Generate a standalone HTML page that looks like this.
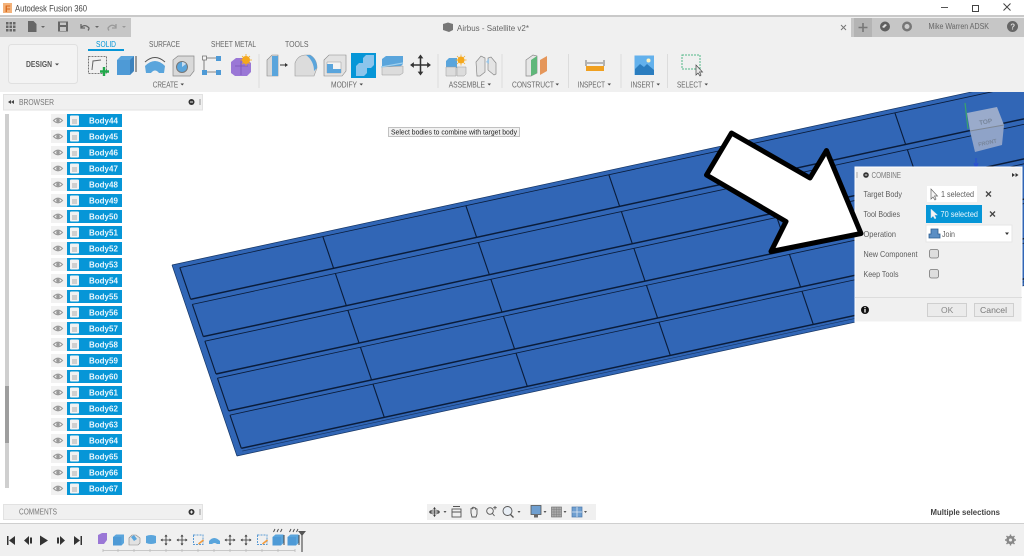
<!DOCTYPE html>
<html><head><meta charset="utf-8"><title>Autodesk Fusion 360</title>
<style>
html,body{margin:0;padding:0;background:#fff;width:1024px;height:556px;overflow:hidden}
svg{display:block;font-family:"Liberation Sans",sans-serif;filter:blur(.35px)}
.l{font-size:8.5px;fill:#666}
.c{font-size:8px;fill:#777}
.b{font-size:8px;font-weight:bold;fill:#e8f6fd}
.n{font-size:8.5px;fill:#5c5c5c}
</style></head><body>
<svg width="1024" height="556" viewBox="0 0 1024 556" xmlns="http://www.w3.org/2000/svg">
<defs>
<path id="col" fill="none" stroke="#0a1c3a" stroke-width="1.1" d="M0 4V35.7M0 40.8V73M0 77.6V110.4M0 114.6V147.3M0 151.5V184.7"/>
<g id="r">
<rect x="51" y="114" width="16" height="13" fill="#f1f1f1"/>
<path d="M53.5 120.5q4.5-4.5 9 0q-4.5 4.5-9 0z" fill="#f4f4f4" stroke="#999" stroke-width="1.1"/>
<circle cx="58" cy="120.5" r="1.8" fill="#999"/>
<rect x="67" y="114" width="55" height="13" fill="#0696d7"/>
<rect x="70" y="115.5" width="9" height="10" rx="1" fill="#f2f2f2"/>
<rect x="72" y="119" width="5" height="5" fill="#cfcfcf"/>
</g>
<g id="mv">
<path d="M0-4.5V4.5M-4.500 0H4.500" fill="none" stroke="#333" stroke-width=".8"/>
<path d="M-1.500-3.500L0-5.500L1.500-3.500zM-1.500 3.500L0 5.500L1.500 3.500zM-3.500-1.500L-5.500 0L-3.500 1.500zM3.500-1.500L5.500 0L3.500 1.500z" fill="#333"/>
</g>
<g id="sk"><rect x="-5" y="-5" width="9.500" height="9.500" fill="none" stroke="#5b9bd5" stroke-dasharray="2 1"/><path d="M0 4L5 0" stroke="#f39c3d" stroke-width="1.600"/></g>
<g id="bx"><path d="M-5.500-3L-2.500-5.500H5.500V3L3 5.500H-5.500z" fill="#5aa5dc"/><path d="M-5.500-3H3V5.500H-5.500z" fill="#4e9ad6"/></g>
</defs>

<!-- plate -->
<g transform="matrix(1 -0.2165 0.34 1 172 265)">
<rect x="0" y="0" width="1000" height="191" fill="#3166b6"/>
<g fill="none" stroke="#0a1c3a">
<path d="M0 0H1000M0 0V191M0 191H1000" stroke-width=".7" stroke="#173766"/>
<path d="M6.500 4H1000M6.500 40.800H1000M6.500 77.600H1000M6.500 114.600H1000M6.500 151.500H1000" stroke-width=".8"/>
<path d="M6.500 35.700H1000M6.500 73H1000M6.500 110.400H1000M6.500 147.300H1000M6.500 184.700H1000" stroke-width="1.400"/>
<path d="M6.500 187.500H1000" stroke-width=".6" stroke="#173766"/>
</g>
<use href="#col" x="6.500"/><use href="#col" x="149.500"/><use href="#col" x="292.500"/><use href="#col" x="435.500"/><use href="#col" x="578.500"/><use href="#col" x="721.500"/><use href="#col" x="864.500"/>
</g>

<!-- view cube -->
<path d="M965 103L968 129" stroke="#3aa36a" stroke-width="1.200" fill="none"/>
<path d="M976 158v9M974 163l2 5l2-5" stroke="#2a4fd0" stroke-width="1.200" fill="none"/>
<path d="M967 113L997 107L1004 125L970 131z" fill="#9aabcb"/>
<path d="M970 131L1004 125L1002 145L975 152z" fill="#8fa3c8"/>
<path d="M970 131L1004 125" stroke="#7e8794" stroke-width="1"/>
<text x="979" y="124" font-size="6.500" font-weight="bold" fill="#77859a" transform="rotate(-10 985 122)">TOP</text>
<text x="978" y="145" font-size="5.500" font-weight="bold" fill="#77859a" transform="rotate(-12 985 143)">FRONT</text>

<!-- chrome -->
<rect x="0" y="0" width="1024" height="15" fill="#fff"/>
<rect x="0" y="15" width="1024" height="2" fill="#c9c9c9"/>
<rect x="0" y="17" width="1024" height="75" fill="#f0f0f0"/>
<rect x="0" y="18" width="131" height="19" fill="#c6c6c6"/>
<rect x="851" y="18" width="173" height="19" fill="#c6c6c6"/>
<rect x="854" y="18" width="18" height="19" fill="#b4b4b4"/>

<rect x="3" y="3" width="9" height="10" fill="#f3b27a"/>
<text x="5" y="12" font-size="9" font-weight="bold" fill="#d9681c">F</text>
<text x="15" y="11.500" font-size="9.500" fill="#444" textLength="72" lengthAdjust="spacingAndGlyphs">Autodesk Fusion 360</text>
<path d="M941 7.500h7" stroke="#555"/>
<rect x="972.500" y="5.500" width="6" height="6" fill="#fff" stroke="#444"/>
<path d="M1003.500 3.500l7 7M1010.500 3.500l-7 7" stroke="#444" stroke-width="1"/>

<!-- qat -->
<g fill="#666">
<path d="M6 22h2.500v2.500H6zM9.500 22H12v2.500H9.500zM13 22h2.500v2.500H13zM6 25.500h2.500V28H6zM9.500 25.500H12V28H9.500zM13 25.500h2.500V28H13zM6 29h2.500v2.500H6zM9.500 29H12v2.500H9.500zM13 29h2.500v2.500H13z"/>
<path d="M28 21h5.500l3 3v8H28z"/><path d="M41 26h4l-2 2z"/>
<path d="M58 21.500h10v10H58z"/><rect x="60" y="22.500" width="6" height="2.500" fill="#c6c6c6"/><rect x="60" y="27" width="6" height="4" fill="#c6c6c6"/>
<path d="M95 26h4l-2 2z"/>
</g>
<path d="M81 27.500q4-4 8 .5q0 1.500-1 2.500M81 24v4h4" fill="none" stroke="#666" stroke-width="1.300"/>
<path d="M116 27q-4-4-8 1q0 1.500 1 2.500M116 24v4h-4" fill="none" stroke="#999" stroke-width="1.300"/>
<path d="M122 26h4l-2 2z" fill="#999"/>

<!-- tab -->
<path d="M443 24l5-1.500l5 1.500v6l-4 2l-6-2z" fill="#777"/>
<text x="457" y="31" font-size="8.500" fill="#666" textLength="72" lengthAdjust="spacingAndGlyphs">Airbus - Satellite v2*</text>
<path d="M841 25l5 5M846 25l-5 5" stroke="#777" stroke-width="1"/>
<path d="M863 23v9M858.500 27.500h9" stroke="#777" stroke-width="1.600"/>
<circle cx="885" cy="26.500" r="5" fill="#5f5f5f"/><path d="M882 27l3-3l2 1l-3 3z" fill="#ddd"/>
<circle cx="907" cy="26.500" r="5" fill="#777"/><circle cx="907" cy="26.500" r="2.500" fill="#ccc"/>
<text x="928.500" y="29" font-size="8" fill="#666" textLength="60.500" lengthAdjust="spacingAndGlyphs">Mike Warren ADSK</text>
<circle cx="1012.500" cy="26.500" r="5.500" fill="#666"/><text x="1010.200" y="29.500" font-size="8" font-weight="bold" fill="#ddd">?</text>

<!-- ribbon tabs -->
<text x="96" y="47" font-size="8" fill="#0696d7" textLength="20" lengthAdjust="spacingAndGlyphs">SOLID</text>
<rect x="88" y="49" width="36" height="2" fill="#0696d7"/>
<text x="149" y="47" font-size="8" fill="#666" textLength="31" lengthAdjust="spacingAndGlyphs">SURFACE</text>
<text x="211" y="47" font-size="8" fill="#666" textLength="45" lengthAdjust="spacingAndGlyphs">SHEET METAL</text>
<text x="285" y="47" font-size="8" fill="#666" textLength="23.500" lengthAdjust="spacingAndGlyphs">TOOLS</text>

<rect x="8.500" y="44.500" width="69" height="39" rx="3" fill="#f3f3f3" stroke="#e0e0e0"/>
<text x="26" y="67" font-size="8" font-weight="bold" fill="#555" textLength="26" lengthAdjust="spacingAndGlyphs">DESIGN</text>
<path d="M55 63.500h4l-2 2z" fill="#444"/>

<g stroke="#dcdcdc"><path d="M259 54v34M438 54v34M502 54v34M568.500 54v34M621 54v34M667.500 54v34"/></g>

<!-- create icons -->
<rect x="88.500" y="56.500" width="18" height="17" fill="none" stroke="#555" stroke-width=".8" stroke-dasharray="2 1"/>
<path d="M92 70l1-9l8-1" fill="none" stroke="#666"/>
<path d="M104 67v9M100 71.500h9" stroke="#20a84a" stroke-width="2.400"/>
<path d="M117 60l4-4h13v15l-4 4h-13z" fill="#5aa5dc"/><path d="M117 60h13v15h-13z" fill="#4e9ad6"/><path d="M130 60l4-4v15l-4 4z" fill="#3d82bd"/>
<path d="M136 56v16" stroke="#444"/>
<path d="M145 66q10-10 20 0l-1 7h-5q-4-5-8 0h-5z" fill="#5aa5dc"/><path d="M145 62q10-9 20 0" fill="none" stroke="#555"/>
<path d="M173 60l5-4h16v15l-4 5h-17z" fill="#d9d9d9" stroke="#888" stroke-width=".7"/><circle cx="182" cy="67" r="5.500" fill="#5aa5dc" stroke="#777"/><path d="M182 67l4-3a5 5 0 0 0-4-2z" fill="#c7ddf0"/>
<path d="M206 58h13M206 72h13M204 60v10" stroke="#666" stroke-width=".8" fill="none"/>
<rect x="202.500" y="56" width="4" height="4" fill="#f3f3f3" stroke="#666" stroke-width=".7"/><rect x="216" y="56" width="5" height="5" fill="#4e9ad6"/><rect x="202" y="70" width="5" height="5" fill="#4e9ad6"/><rect x="216" y="70" width="5" height="5" fill="#4e9ad6"/>
<path d="M231 62l5-4h9l6 5v9l-4 4h-12l-4-3z" fill="#9a77d6"/><path d="M235 66h13M241 60v15" stroke="#7a55b8" stroke-width=".8"/>
<circle cx="246" cy="60" r="4" fill="#f5a81c"/><path d="M246 54v12M240 60h12M242 56l8 8M250 56l-8 8" stroke="#f5a81c" stroke-width=".8"/>
<text x="152.700" y="87.500" class="l" textLength="25.500" lengthAdjust="spacingAndGlyphs">CREATE</text><path d="M180.500 83.500h3.500l-1.750 2z" fill="#444"/>

<!-- modify icons -->
<path d="M267 60l5-5h6v21h-11z" fill="#d8d8d8" stroke="#888" stroke-width=".6"/><path d="M272 56h6v20h-6z" fill="#5aa5dc"/><path d="M280 65h6" stroke="#333"/><path d="M285 63l3 2l-3 2z" fill="#333"/>
<path d="M295 76V63q3-8 11-8h4q7 4 7 13l-3 8z" fill="#dcdcdc" stroke="#999" stroke-width=".6"/><path d="M306 55h4q7 4 7 13l-3 3q0-10-8-16z" fill="#5aa5dc"/>
<path d="M324 60l5-5h17v16l-4 5h-18z" fill="#e2e2e2" stroke="#888" stroke-width=".6"/><path d="M327 62h14v11h-14z" fill="#f3f3f3" stroke="#999" stroke-width=".5"/><path d="M327 64h6v5h8v4h-14z" fill="#5aa5dc"/>
<rect x="351" y="53" width="25" height="25" fill="#0696d7"/><path d="M356 66l3-3h4v-5l3-3h8v10l-3 3h-4v5l-3 3h-8z" fill="#8cc5ec"/>
<path d="M382 59l4-3h17v8l-3 3h-18z" fill="#5aa5dc"/><path d="M382 71v-4l21-1v7l-3 2h-18z" fill="#dcdcdc" stroke="#999" stroke-width=".5"/><path d="M381 67l22-4" stroke="#9fd0ee" stroke-width="1.200"/>
<g transform="translate(420.500 65) scale(1.900)"><use href="#mv"/></g>
<text x="331" y="87.500" class="l" textLength="26" lengthAdjust="spacingAndGlyphs">MODIFY</text><path d="M359.500 83.500h3.500l-1.750 2z" fill="#444"/>

<!-- assemble icons -->
<path d="M446 61l3-3h8v10h-11z" fill="#5aa5dc"/><path d="M446 67h10v9h-10zM457 67h9v7l-2 2h-7z" fill="#dcdcdc" stroke="#999" stroke-width=".5"/>
<circle cx="461" cy="60" r="3.500" fill="#f5a81c"/><path d="M461 54.500v11M455.500 60h11M457 56l8 8M465 56l-8 8" stroke="#f5a81c" stroke-width=".7"/>
<path d="M476 62l5-6l4 2v14l-5 4h-3z" fill="#e4e4e4" stroke="#888" stroke-width=".7"/><path d="M496 63l-5-6l-3 1v12l6 5l2-1z" fill="#e4e4e4" stroke="#888" stroke-width=".7"/><path d="M486 62l3-4v6z" fill="#9cc6e6"/>
<text x="448.700" y="87.500" class="l" textLength="36.300" lengthAdjust="spacingAndGlyphs">ASSEMBLE</text><path d="M487.500 83.500h3.500l-1.750 2z" fill="#444"/>

<!-- construct -->
<path d="M526 60l7-5l4 1v17l-6 3h-5z" fill="#e6e6e6" stroke="#888" stroke-width=".7"/><path d="M531 60l6-4v17l-6 3z" fill="#5fb77a"/><path d="M540 60l7-4v15l-7 4z" fill="#e5965a"/>
<text x="512" y="87.500" class="l" textLength="42" lengthAdjust="spacingAndGlyphs">CONSTRUCT</text><path d="M555.500 83.500h3.500l-1.750 2z" fill="#444"/>

<!-- inspect -->
<path d="M586 60v6M604 60v6M587 63h16" stroke="#555" stroke-width=".8" fill="none"/>
<rect x="586" y="66" width="18" height="5" fill="#f0a020"/>
<text x="577.700" y="87.500" class="l" textLength="27.300" lengthAdjust="spacingAndGlyphs">INSPECT</text><path d="M607.500 83.500h3.500l-1.750 2z" fill="#444"/>

<!-- insert -->
<rect x="634.500" y="55.500" width="19.500" height="19.500" fill="#63b1ec"/><path d="M635 75v-6l5-5l4 3l3-3l7 6v5z" fill="#2b7dbf"/><circle cx="648.500" cy="60.500" r="2" fill="#fff3c0"/>
<text x="630.700" y="87.500" class="l" textLength="23.600" lengthAdjust="spacingAndGlyphs">INSERT</text><path d="M656.500 83.500h3.500l-1.750 2z" fill="#444"/>

<!-- select -->
<rect x="682" y="55" width="18" height="14" fill="none" stroke="#52b788" stroke-dasharray="2 1"/>
<path d="M696 65v10l2-2l2 3l1-1l-1.500-3h3z" fill="#e8e8e8" stroke="#444" stroke-width=".7"/>
<text x="677" y="87.500" class="l" textLength="25" lengthAdjust="spacingAndGlyphs">SELECT</text><path d="M704.500 83.500h3.500l-1.750 2z" fill="#444"/>

<!-- browser -->
<rect x="3.500" y="94.500" width="199" height="15.500" fill="#f0f0f0" stroke="#e2e2e2"/>
<path d="M11 102l3-2v4zM8 102l3-2v4z" fill="#444"/>
<text x="19" y="105" class="c" textLength="35" lengthAdjust="spacingAndGlyphs">BROWSER</text>
<circle cx="191.500" cy="102" r="3" fill="#333"/><path d="M190 102h3" stroke="#eee"/><path d="M200 99v6" stroke="#999"/>
<rect x="5" y="114" width="4" height="374" fill="#cfcfcf"/>
<rect x="5" y="386" width="4" height="57" fill="#9e9e9e"/>

<use href="#r"/><use href="#r" y="16"/><use href="#r" y="32"/><use href="#r" y="48"/><use href="#r" y="64"/><use href="#r" y="80"/>
<use href="#r" y="96"/><use href="#r" y="112"/><use href="#r" y="128"/><use href="#r" y="144"/><use href="#r" y="160"/><use href="#r" y="176"/>
<use href="#r" y="192"/><use href="#r" y="208"/><use href="#r" y="224"/><use href="#r" y="240"/><use href="#r" y="256"/><use href="#r" y="272"/>
<use href="#r" y="288"/><use href="#r" y="304"/><use href="#r" y="320"/><use href="#r" y="336"/><use href="#r" y="352"/><use href="#r" y="368"/>
<g>
<text class="b" x="89" y="123.500">Body44</text><text class="b" x="89" y="139.500">Body45</text><text class="b" x="89" y="155.500">Body46</text><text class="b" x="89" y="171.500">Body47</text>
<text class="b" x="89" y="187.500">Body48</text><text class="b" x="89" y="203.500">Body49</text><text class="b" x="89" y="219.500">Body50</text><text class="b" x="89" y="235.500">Body51</text>
<text class="b" x="89" y="251.500">Body52</text><text class="b" x="89" y="267.500">Body53</text><text class="b" x="89" y="283.500">Body54</text><text class="b" x="89" y="299.500">Body55</text>
<text class="b" x="89" y="315.500">Body56</text><text class="b" x="89" y="331.500">Body57</text><text class="b" x="89" y="347.500">Body58</text><text class="b" x="89" y="363.500">Body59</text>
<text class="b" x="89" y="379.500">Body60</text><text class="b" x="89" y="395.500">Body61</text><text class="b" x="89" y="411.500">Body62</text><text class="b" x="89" y="427.500">Body63</text>
<text class="b" x="89" y="443.500">Body64</text><text class="b" x="89" y="459.500">Body65</text><text class="b" x="89" y="475.500">Body66</text><text class="b" x="89" y="491.500">Body67</text>
</g>

<!-- comments -->
<rect x="3.500" y="504.500" width="199" height="15" fill="#f0f0f0" stroke="#e2e2e2"/>
<text x="19" y="514.500" class="c" textLength="38" lengthAdjust="spacingAndGlyphs">COMMENTS</text>
<circle cx="191.500" cy="512" r="3" fill="#333"/><path d="M190 512h3M191.500 510.500v3" stroke="#eee"/><path d="M200 509v6" stroke="#999"/>

<!-- tooltip -->
<rect x="388.500" y="127.500" width="131" height="9" fill="#f2f2f2" stroke="#aaa" stroke-width=".7"/>
<text x="391" y="134.500" font-size="7" fill="#222" textLength="126" lengthAdjust="spacingAndGlyphs">Select bodies to combine with target body</text>

<!-- nav bar -->
<rect x="427" y="504" width="169" height="16" fill="#f0f0f0"/>
<g transform="translate(434.500 512) scale(.9)"><use href="#mv"/></g>
<ellipse cx="434.500" cy="512" rx="5" ry="2" fill="none" stroke="#555" stroke-width=".7"/>
<g fill="#555">
<path d="M443.500 511h3l-1.500 2z"/><path d="M517.500 511h3l-1.500 2z"/><path d="M543.500 511h3l-1.500 2z"/><path d="M563.500 511h3l-1.500 2z"/><path d="M584 511h3l-1.500 2z"/>
</g>
<g fill="none" stroke="#555" stroke-width=".9">
<rect x="452" y="509" width="9" height="8"/><path d="M453 506.500h7M452 512h9"/>
<path d="M471 513v-4.500a1 1 0 0 1 1.500 0v-1a1 1 0 0 1 1.500 0v.5a1 1 0 0 1 1.500 0v1a1 1 0 0 1 1.500 0v5l-1 3h-4z"/>
<circle cx="490" cy="511" r="3.300"/><path d="M492.500 513.500l2 2.500M495 506v3.500M493.200 507.700h3.600"/>
<circle cx="507.500" cy="511" r="4.500" fill="#e8eef5"/><path d="M510.500 514.500l3 3" stroke-width="1.300"/>
</g>
<rect x="531" y="505.500" width="10" height="9" fill="#6f9fd0" stroke="#555" stroke-width=".8"/><path d="M534 515h4v2.500h-4z" fill="#666"/>
<rect x="551.500" y="507" width="10" height="10" fill="#aaa" stroke="#666" stroke-width=".6"/><path d="M554 507v10M556.500 507v10M559 507v10M551.500 509.500h10M551.500 512h10M551.500 514.500h10" stroke="#777" stroke-width=".4"/>
<rect x="572" y="507" width="10" height="10" fill="#6f9fd0" stroke="#4a78ac" stroke-width=".7"/><path d="M577 507v10M572 512h10" stroke="#dfe9f3" stroke-width=".8"/>

<text x="930.500" y="515" font-size="8" font-weight="bold" fill="#444" textLength="69.500" lengthAdjust="spacingAndGlyphs">Multiple selections</text>

<!-- footer -->
<rect x="0" y="523" width="1024" height="1" fill="#cfcfcf"/>
<rect x="0" y="524" width="1024" height="32" fill="#f0f0f0"/>
<g fill="#333">
<path d="M7 536h1.500v9H7zM15 536v9l-6-4.500z"/>
<path d="M29 536v9l-5-4.500zM30 537.500h2v6h-2z"/>
<path d="M40 535.500l8 5l-8 5z"/>
<path d="M60 536v9l5-4.500zM57 537.500h2v6h-2z"/>
<path d="M74 536v9l6-4.500zM80.500 536H82v9h-1.500z"/>
</g>
<path d="M98 535l4-2h5v7l-3 4h-6z" fill="#9a77d6"/>
<g transform="translate(118.500 540)"><use href="#bx"/></g>
<path d="M129 538l3-3h4l4 3v5l-2 2h-9z" fill="#e2e2e2" stroke="#888" stroke-width=".6"/><path d="M131 537l3-2l3 4l-3 2z" fill="#5aa5dc"/>
<path d="M146 536q5-2 10 0v7q-5 2-10 0z" fill="#5aa5dc"/>
<g transform="translate(166 540) scale(1)"><use href="#mv"/></g>
<g transform="translate(182 540) scale(1)"><use href="#mv"/></g>
<g transform="translate(198.500 540)"><use href="#sk"/></g>
<path d="M209 541q5-6 11 0v3h-3q-2.500-2-5 0h-3z" fill="#5aa5dc"/>
<g transform="translate(230 540) scale(1)"><use href="#mv"/></g>
<g transform="translate(246 540) scale(1)"><use href="#mv"/></g>
<g transform="translate(262.500 540)"><use href="#sk"/></g>
<g transform="translate(278 540)"><use href="#bx"/></g><path d="M284 535v10" stroke="#444"/>
<g transform="translate(293 540)"><use href="#bx"/></g><path d="M299 535v10" stroke="#444"/>
<path d="M273.500 532l1.500-3M277 532l1.500-3M280.500 532l1.500-3M289.500 532l1.500-3M293 532l1.500-3M296.500 532l1.500-3" stroke="#444" stroke-width=".9" fill="none"/>
<path d="M103 550.500H295M103 549v3M118 549v3M134 549v3M150 549v3M166 549v3M182 549v3M198 549v3M214 549v3M230 549v3M246 549v3M262 549v3M278 549v3M295 549v3" stroke="#bbb" stroke-width=".8" fill="none"/>
<path d="M298 531h8l-4 5z" fill="#555"/><path d="M302 534v18" stroke="#555" stroke-width="1.200"/>
<circle cx="1010.500" cy="540" r="3.200" fill="none" stroke="#888" stroke-width="2"/><path d="M1010.500 534.500v11M1005 540h11M1006.500 536l8 8M1014.500 536l-8 8" stroke="#888" stroke-width="1.400"/><circle cx="1010.500" cy="540" r="1.500" fill="#f0f0f0"/>

<!-- combine panel -->
<rect x="855" y="167" width="167" height="155" fill="#f0f0f0" stroke="#fff" stroke-width="1"/>
<path d="M857 172v6" stroke="#aaa"/>
<circle cx="866" cy="175" r="2.800" fill="#333"/><path d="M864.800 175h2.400" stroke="#eee"/>
<text x="871.500" y="178" font-size="8" fill="#777" textLength="29.500" lengthAdjust="spacingAndGlyphs">COMBINE</text>
<path d="M1012 173l3 2l-3 2zM1015.500 173l3 2l-3 2z" fill="#333"/>

<text x="863.500" y="197" class="n" textLength="38.500" lengthAdjust="spacingAndGlyphs">Target Body</text>
<rect x="927" y="186" width="50" height="16" fill="#fff"/>
<path d="M931 189v10l2-2l2 3l1-1l-1.500-3h3z" fill="#f4f4f4" stroke="#666" stroke-width=".7"/>
<text x="941" y="197" class="n" textLength="33" lengthAdjust="spacingAndGlyphs">1 selected</text>
<path d="M986 191.500l5 5M991 191.500l-5 5" stroke="#444" stroke-width="1.300"/>

<text x="863.500" y="217" class="n" textLength="36.500" lengthAdjust="spacingAndGlyphs">Tool Bodies</text>
<rect x="926" y="205" width="56" height="18" fill="#0696d7"/>
<path d="M931 209v9l2-2l2 3l1-1l-1.500-3h3z" fill="#f4f4f4" stroke="#cde" stroke-width=".5"/>
<text x="940.500" y="217" class="n" style="fill:#eaf7fd" textLength="37.500" lengthAdjust="spacingAndGlyphs">70 selected</text>
<path d="M990 211.500l5 5M995 211.500l-5 5" stroke="#444" stroke-width="1.300"/>

<text x="863.500" y="237" class="n" textLength="32.500" lengthAdjust="spacingAndGlyphs">Operation</text>
<rect x="926" y="225" width="86" height="17" fill="#fff" stroke="#e6e6e6"/>
<path d="M931 229h7v5h2v4h-11v-4h2z" fill="#5a8ec4" stroke="#2b5c90" stroke-width=".8"/>
<text x="942" y="237" class="n" textLength="13" lengthAdjust="spacingAndGlyphs">Join</text>
<path d="M1005 232.500h4l-2 2.500z" fill="#333"/>

<text x="863.500" y="257" class="n" textLength="54" lengthAdjust="spacingAndGlyphs">New Component</text>
<rect x="929.500" y="249.500" width="9" height="8.500" rx="2" fill="#dedede" stroke="#777" stroke-width=".8"/>
<text x="863.500" y="277" class="n" textLength="35" lengthAdjust="spacingAndGlyphs">Keep Tools</text>
<rect x="929.500" y="269.500" width="9" height="8.500" rx="2" fill="#dedede" stroke="#777" stroke-width=".8"/>

<path d="M855 297.500h167" stroke="#dcdcdc"/>
<circle cx="865" cy="310" r="4" fill="#111"/><rect x="864.300" y="309" width="1.400" height="3.500" fill="#eee"/><rect x="864.300" y="307" width="1.400" height="1.200" fill="#eee"/>
<rect x="927.500" y="303.500" width="39" height="13" fill="#ebebeb" stroke="#cfcfcf"/>
<text x="941" y="313" font-size="8.500" fill="#888">OK</text>
<rect x="974.500" y="303.500" width="39" height="13" fill="#ebebeb" stroke="#cfcfcf"/>
<text x="980" y="313" font-size="8.500" fill="#777" textLength="27" lengthAdjust="spacingAndGlyphs">Cancel</text>

<!-- arrow -->
<path d="M731.500 133L706.500 175L786 221.500L771 251.500L861 233.500L826.500 150.500L810 178z" fill="#fff" stroke="#000" stroke-width="5" stroke-linejoin="round"/>
</svg>
</body></html>
